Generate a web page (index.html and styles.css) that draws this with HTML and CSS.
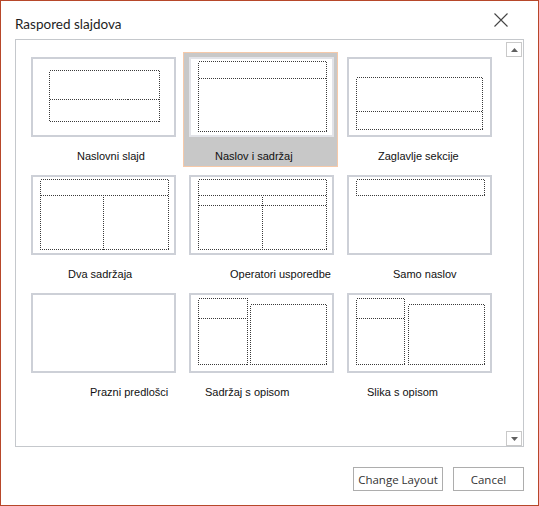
FILE: index.html
```html
<!DOCTYPE html>
<html>
<head>
<meta charset="utf-8">
<link rel="stylesheet" href="styles.css">
</head>
<body>
<div class="dialog">
  <div class="titlebar">
    <span class="title">Raspored slajdova</span>
    <svg class="close" width="14" height="14" viewBox="0 0 14 14"><path d="M0.5 0.5 L13.5 13.5 M13.5 0.5 L0.5 13.5" stroke="#444" stroke-width="1.1" fill="none"/></svg>
  </div>
  <div class="listbox">
    <div class="grid">
      <div class="cell">
        <div class="thumb"><svg width="141" height="76"><rect class="ph" x="16.5" y="11.5" width="110" height="51"/><line class="ph" x1="16.5" y1="40.5" x2="126.5" y2="40.5"/></svg></div>
        <div class="label s45">Naslovni slajd</div>
      </div>
      <div class="cell selected">
        <div class="thumb"><svg width="141" height="76"><rect class="ph" x="7.5" y="2.5" width="128" height="70"/><line class="ph" x1="7.5" y1="19.5" x2="135.5" y2="19.5"/></svg></div>
        <div class="label s25">Naslov i sadržaj</div>
      </div>
      <div class="cell">
        <div class="thumb"><svg width="141" height="76"><rect class="ph" x="7.5" y="18.5" width="126" height="52"/><line class="ph" x1="7.5" y1="52.5" x2="133.5" y2="52.5"/></svg></div>
        <div class="label s30">Zaglavlje sekcije</div>
      </div>
      <div class="cell">
        <div class="thumb"><svg width="141" height="76"><rect class="ph" x="7.5" y="2.5" width="128" height="70"/><line class="ph" x1="7.5" y1="18.5" x2="135.5" y2="18.5"/><line class="ph" x1="70.5" y1="19.5" x2="70.5" y2="72.5"/></svg></div>
        <div class="label s36">Dva sadržaja</div>
      </div>
      <div class="cell">
        <div class="thumb"><svg width="141" height="76"><rect class="ph" x="7.5" y="2.5" width="128" height="70"/><line class="ph" x1="7.5" y1="18.5" x2="135.5" y2="18.5"/><line class="ph" x1="7.5" y1="28.5" x2="135.5" y2="28.5"/><line class="ph" x1="71.5" y1="19.5" x2="71.5" y2="72.5"/></svg></div>
        <div class="label s40">Operatori usporedbe</div>
      </div>
      <div class="cell">
        <div class="thumb"><svg width="141" height="76"><rect class="ph" x="7.5" y="2.5" width="128" height="16"/></svg></div>
        <div class="label s45">Samo naslov</div>
      </div>
      <div class="cell">
        <div class="thumb"><svg width="141" height="76"></svg></div>
        <div class="label s58">Prazni predlošci</div>
      </div>
      <div class="cell">
        <div class="thumb"><svg width="141" height="76"><rect class="ph" x="7.5" y="3.5" width="49" height="66"/><line class="ph" x1="7.5" y1="23.5" x2="56.5" y2="23.5"/><rect class="ph" x="59.5" y="9.5" width="76" height="60"/></svg></div>
        <div class="label s15">Sadržaj s opisom</div>
      </div>
      <div class="cell">
        <div class="thumb"><svg width="141" height="76"><rect class="ph" x="7.5" y="3.5" width="48" height="66"/><line class="ph" x1="7.5" y1="23.5" x2="55.5" y2="23.5"/><rect class="ph" x="59.5" y="9.5" width="76" height="60"/></svg></div>
        <div class="label s19">Slika s opisom</div>
      </div>
    </div>
    <div class="scrollbar">
      <div class="sbtn"><svg width="7" height="4" viewBox="0 0 7 4"><polygon points="0,4 7,4 3.5,0" fill="#606060"/></svg></div>
      <div class="track"></div>
      <div class="sbtn"><svg width="7" height="4" viewBox="0 0 7 4"><polygon points="0,0 7,0 3.5,4" fill="#606060"/></svg></div>
    </div>
  </div>
  <div class="actions">
    <button class="btn wide">Change Layout</button>
    <button class="btn">Cancel</button>
  </div>
</div>
</body>
</html>
```

FILE: styles.css
```css
* { box-sizing: border-box; }
html, body { margin: 0; padding: 0; background: #fff; }
.dialog {
  width: 539px;
  height: 506px;
  border: 1px solid #b7472a;
  padding: 0 14px 14px 14px;
  display: flex;
  flex-direction: column;
  background: #fff;
}
.titlebar {
  height: 38px;
  display: flex;
  align-items: flex-start;
  justify-content: space-between;
  padding-top: 12px;
}
.title {
  font-family: "Lato", "Open Sans", sans-serif;
  font-size: 13.5px;
  line-height: 22px;
  color: #1e1e1e;
}
.close { margin-right: 16px; margin-top: 0; }
.listbox {
  height: 408px;
  border: 1px solid #c5c8cc;
  display: flex;
}
.grid {
  flex: 1;
  display: grid;
  grid-template-columns: repeat(3, 155px);
  grid-auto-rows: 115px;
  column-gap: 3px;
  row-gap: 3px;
  padding: 12px 0 0 9px;
  align-content: start;
}
.cell {
  padding: 5px 0 0 6px;
  border: 1px solid transparent;
}
.cell .thumb { margin: -1px 0 0 -1px; }
.cell.selected {
  background: #c8c8c8;
  border-color: #f6c9a9;
}
.thumb {
  width: 145px;
  height: 80px;
  border: 2px solid #cdd0d7;
  background: #fff;
}
.selected .thumb { border-color: #e2e3e8; }
.thumb svg { display: block; }
.ph {
  fill: none;
  stroke: #3a3a3a;
  stroke-width: 1;
  stroke-dasharray: 1 1;
  shape-rendering: crispEdges;
}
.label {
  font-family: "Liberation Sans", Arial, sans-serif;
  font-size: 11px;
  line-height: 13px;
  color: #111;
  margin-top: 13px;
  white-space: nowrap;
}
.s15 { padding-left: 15px; }
.s19 { padding-left: 19px; }
.s25 { padding-left: 25px; }
.s30 { padding-left: 30px; }
.s36 { padding-left: 36px; }
.s40 { padding-left: 40px; }
.s45 { padding-left: 45px; }
.s58 { padding-left: 58px; }
.scrollbar {
  width: 17px;
  display: flex;
  flex-direction: column;
  padding: 2px 0 0 0;
}
.sbtn {
  width: 16px;
  height: 15px;
  border: 1px solid #c9c9c9;
  background: #fff;
  display: flex;
  align-items: center;
  justify-content: center;
}
.sbtn svg { display: block; }
.track { flex: 1; }
.actions {
  margin-top: 20px;
  display: flex;
  justify-content: flex-end;
  gap: 10px;
}
.btn {
  height: 24px;
  width: 71px;
  border: 1px solid #adadad;
  background: #fff;
  font-family: "Open Sans", "Noto Sans", sans-serif;
  font-size: 11.5px;
  color: #333;
  padding: 0;
  margin: 0;
}
.btn.wide { width: 90px; }
```
